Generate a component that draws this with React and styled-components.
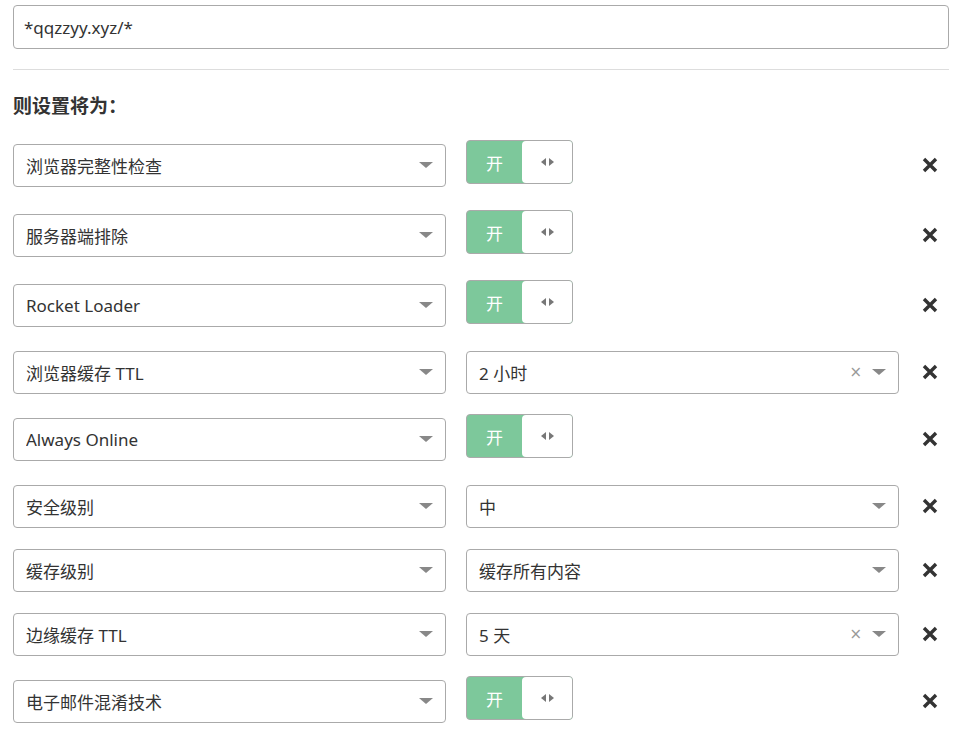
import styled, { createGlobalStyle } from "styled-components";

const GlobalStyle = createGlobalStyle`
  body {
    margin: 0;
    background: #fff;
    font-family: "Noto Sans", "Noto Sans CJK SC", sans-serif;
    color: #333;
  }
  * { box-sizing: border-box; }
`;

const Page = styled.div`
  width: 962px;
  padding: 5px 13px 0 13px;
`;

const UrlInput = styled.div`
  height: 44px;
  border: 1px solid #aaa;
  border-radius: 4px;
  padding: 0 10px;
  display: flex;
  align-items: center;
  font-size: 17px;
  color: #333;
`;

const Divider = styled.hr`
  margin: 20px 0 0 0;
  border: 0;
  border-top: 1px solid #ddd;
`;

const Heading = styled.div`
  margin: 23px 0 23px 0;
  font-family: "Noto Sans CJK SC", sans-serif;
  font-size: 19px;
  font-weight: bold;
  line-height: 24px;
  color: #333;
`;

const Row = styled.div`
  display: grid;
  grid-template-columns: 433px 433px 1fr;
  column-gap: 20px;
  align-items: center;
  height: ${(p) => (p.$tall ? "50px" : "44px")};
  margin-bottom: 20px;
`;

const Select = styled.div`
  height: 43px;
  border: 1px solid #aaa;
  border-radius: 4px;
  padding: 0 12px 0 12px;
  display: flex;
  align-items: center;
  gap: 10px;
  font-size: 17px;
  color: #333;
  background: #fff;
  .value {
    flex: 1;
    white-space: nowrap;
    overflow: hidden;
  }
  .clear {
    color: #999;
    font-size: 15px;
    line-height: 1;
    font-family: "DejaVu Sans", sans-serif;
  }
`;

const Caret = styled.span`
  width: 0;
  height: 0;
  border-left: 7px solid transparent;
  border-right: 7px solid transparent;
  border-top: 6px solid #888;
`;

const SwitchCell = styled.div`
  height: 50px;
  display: flex;
  align-items: flex-start;
`;

const Switch = styled.div`
  width: 107px;
  height: 44px;
  border: 1px solid #aaa;
  border-radius: 4px;
  overflow: hidden;
  display: flex;
  background: #7dc89b;
  .on {
    width: 55px;
    display: flex;
    align-items: center;
    justify-content: center;
    color: #fff;
    font-size: 17px;
    font-family: "Noto Sans CJK SC", sans-serif;
  }
  .handle {
    flex: 1;
    background: #fff;
    border-radius: 4px 0 0 4px;
    display: flex;
    align-items: center;
    justify-content: center;
    gap: 3px;
  }
`;

const Tri = styled.span`
  width: 0;
  height: 0;
  border-top: 4.5px solid transparent;
  border-bottom: 4.5px solid transparent;
  ${(p) =>
    p.$dir === "left"
      ? "border-right: 5px solid #777;"
      : "border-left: 5px solid #777;"}
`;

const RemoveButton = styled.button`
  justify-self: start;
  margin-left: 3px;
  padding: 0;
  border: 0;
  background: none;
  display: flex;
  cursor: pointer;
`;

const rules = [
  { name: "浏览器完整性检查", type: "switch" },
  { name: "服务器端排除", type: "switch" },
  { name: "Rocket Loader", type: "switch" },
  { name: "浏览器缓存 TTL", type: "select", value: "2 小时", clear: true },
  { name: "Always Online", type: "switch" },
  { name: "安全级别", type: "select", value: "中" },
  { name: "缓存级别", type: "select", value: "缓存所有内容" },
  { name: "边缘缓存 TTL", type: "select", value: "5 天", clear: true },
  { name: "电子邮件混淆技术", type: "switch" },
];

const CloseIcon = () => (
  <svg width="16" height="16" viewBox="0 0 16 16">
    <path
      d="M2 2 L14 14 M14 2 L2 14"
      stroke="#333"
      strokeWidth="3.4"
      strokeLinecap="butt"
    />
  </svg>
);

const SelectBox = ({ value, clear }) => (
  <Select>
    <span className="value">{value}</span>
    {clear && <span className="clear">×</span>}
    <Caret />
  </Select>
);

const RuleRow = ({ name, type, value, clear }) => {
  const tall = type === "switch";
  return (
    <Row $tall={tall}>
      <SelectBox value={name} />
      {tall ? (
        <SwitchCell>
          <Switch>
            <span className="on">开</span>
            <span className="handle">
              <Tri $dir="left" />
              <Tri $dir="right" />
            </span>
          </Switch>
        </SwitchCell>
      ) : (
        <SelectBox value={value} clear={clear} />
      )}
      <RemoveButton>
        <CloseIcon />
      </RemoveButton>
    </Row>
  );
};

export default function App() {
  return (
    <>
      <GlobalStyle />
      <Page>
        <UrlInput>*qqzzyy.xyz/*</UrlInput>
        <Divider />
        <Heading>则设置将为：</Heading>
        {rules.map((r) => (
          <RuleRow key={r.name} {...r} />
        ))}
      </Page>
    </>
  );
}
